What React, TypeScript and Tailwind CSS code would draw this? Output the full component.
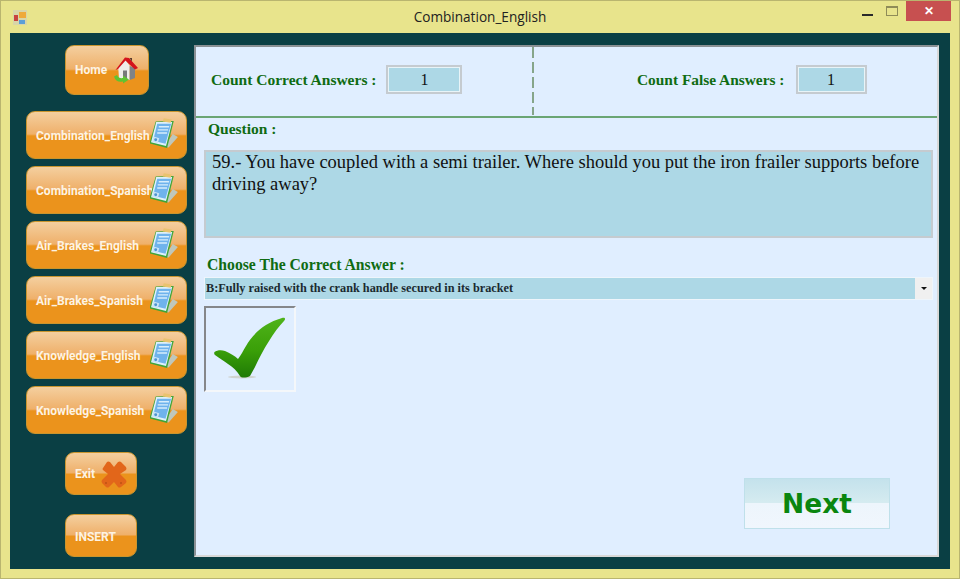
const SIDE_BUTTONS = [
  "Combination_English",
  "Combination_Spanish",
  "Air_Brakes_English",
  "Air_Brakes_Spanish",
  "Knowledge_English",
  "Knowledge_Spanish",
];

const GLOSS =
  "bg-[linear-gradient(to_bottom,#f4cf9f_0%,#efb06a_48%,#eb931c_52%,#eb931c_100%)] border border-[#c9952e]";

function ClipboardIcon() {
  return (
    <svg width="31" height="34" viewBox="0 0 30 32" className="shrink-0">
      <path d="M22 16 L27 19 L18 29 L14 28 Z" fill="#bfc7bb" />
      <path d="M5.5 4 L23 3.5 L16.5 29.5 L-0.5 25 Z" fill="#3fa53a" />
      <path d="M6 4.5 L21.5 4.5 L15.5 27.5 L1 24 Z" fill="#dff0fb" />
      <path d="M7 6 L20.5 6 L15 25.5 L3 22.5 Z" fill="#6fb3ec" />
      <path d="M8.5 9 H18.5 M7.5 12 H17.5 M7 15 H16.5" stroke="#d8edfb" strokeWidth="1.3" />
      <path d="M3.5 18.5 L9 20 L7.5 25 L2 23.5 Z" fill="#c9e4f6" />
      <circle cx="5.5" cy="21.5" r="1.4" fill="#4e94cf" />
      <path d="M13.3 0.7 L21 2 L20 5 L12.3 4 Z" fill="#e9c36f" />
    </svg>
  );
}

function HomeIcon() {
  return (
    <svg width="26" height="27" viewBox="0 0 26 27" className="shrink-0">
      <path d="M4.3 10 L11.7 3 L15.7 9 V23 L5 23 Z" fill="#eeeeea" />
      <path d="M15.7 9 L21 11 V21 L15.7 23 Z" fill="#7f8387" />
      <rect x="9" y="13.5" width="4" height="8.5" fill="#77797a" />
      <path d="M1.5 13 L11 0.5 L15 1 L24 11 L21 12.5 L14.5 6.5 L11.5 3.5 L4 12 Z" fill="#d4131c" />
      <path d="M15.5 1 H18 V4.5 Z" fill="#5b3b2c" />
      <path d="M0 19.5 L3 18 C4 21 7 21.5 9 21 L9 18.5 L15 22.5 L9 26.5 L9 24.5 C5 25.5 1 24 0 19.5 Z" fill="#5fc332" />
    </svg>
  );
}

function CrossIcon() {
  return (
    <svg width="28" height="28" viewBox="0 0 28 28" className="shrink-0">
      <path
        d="M3 8 L7 2 Q8 1 10 2 L14 7 L18 2 Q20 1 21 2 L26 7 Q27 9 26 10 L20 14 L26 20 Q27 22 26 23 L21 27 Q19 28 18 27 L14 22 L9 27 Q8 28 6 27 L2 23 Q1 21 2 20 L8 14 L3 10 Q2 9 3 8 Z"
        fill="#e2661a"
      />
      <circle cx="6" cy="23" r="0.7" fill="#9c3a10" />
      <circle cx="21" cy="23" r="0.7" fill="#9c3a10" />
    </svg>
  );
}

function CheckMark() {
  return (
    <svg width="72" height="62" viewBox="0 0 72 62">
      <defs>
        <linearGradient id="tick" x1="0" y1="0" x2="0" y2="1">
          <stop offset="0" stopColor="#4fb31a" />
          <stop offset="0.55" stopColor="#3a9f08" />
          <stop offset="1" stopColor="#1f7a06" />
        </linearGradient>
      </defs>
      <ellipse cx="28" cy="60" rx="14" ry="1.4" fill="#cfd3cf" />
      <path
        d="M0.5 35 C3 33 8 33 11 34 C16 36 21 39 24 42 C27 38 29 34 32 29 C38 18 50 6 68 1 C71 0 72 2 70 4 C60 14 49 33 41 50 L36 59 C32 61 27 61 26 59 C23 54 19 50 14 47 C10 44 5 41 1 38 C0 37 0 36 0.5 35 Z"
        fill="url(#tick)"
      />
    </svg>
  );
}

function OrangeButton({ label, icon, className }: { label: string; icon?: React.ReactNode; className: string }) {
  return (
    <button type="button" className={`flex items-center rounded-[9px] pl-[9px] ${GLOSS} ${className}`}>
      <span className="font-['Roboto',sans-serif] text-[12px] font-bold text-[#fdf3e3]">{label}</span>
      {icon}
    </button>
  );
}

export default function App() {
  return (
    <div className="flex h-[579px] w-[960px] flex-col border border-[#b9b56f] bg-[#e8e48c] font-['Liberation_Serif',serif]">
      {/* title bar */}
      <div className="flex h-[32px] shrink-0 items-start">
        <svg width="14" height="15" viewBox="0 0 14 15" className="ml-[12px] mt-[9px]">
          <rect width="14" height="15" fill="#d8d6a8" />
          <rect x="1" y="5" width="4" height="6" fill="#c8433f" />
          <rect x="6" y="2" width="7" height="6" fill="#eeaa3a" />
          <rect x="6" y="10" width="6" height="4" fill="#5c9fd8" />
        </svg>
        <div className="flex-1 pl-[71px] pt-[7px] text-center font-['Open_Sans',sans-serif] text-[13.6px] leading-[18px] text-[#222]">
          Combination_English
        </div>
        <div className="mr-[8px] flex items-start">
          <div className="mt-[13px] h-[2px] w-[11px] bg-[#2a2a2a]" />
          <div className="ml-[13px] mt-[5px] h-[10px] w-[12px] border border-[#8f8c58] border-t-2" />
          <div className="ml-[8px] flex h-[20px] w-[45px] items-center justify-center bg-[#c75050] font-['Liberation_Sans',sans-serif] text-[12px] font-bold text-white">
            ✕
          </div>
        </div>
      </div>

      {/* dark body */}
      <div className="ml-[9px] mr-[9px] flex h-[536px] shrink-0 bg-[#0a3f44] pt-[12px]">
        <div className="w-[184px] shrink-0 pl-[16px]">
          <OrangeButton
            label="Home"
            icon={<span className="ml-[7px]"><HomeIcon /></span>}
            className="ml-[39px] h-[50px] w-[84px]"
          />
          <div className="mt-[16px] flex flex-col gap-[7px]">
            {SIDE_BUTTONS.map((name) => (
              <OrangeButton
                key={name}
                label={name}
                icon={<span className="absolute right-[5px] top-[5px]"><ClipboardIcon /></span>}
                className="relative h-[48px] w-[161px] pt-[2px]"
              />
            ))}
          </div>
          <OrangeButton
            label="Exit"
            icon={<span className="ml-[5px]"><CrossIcon /></span>}
            className="ml-[39px] mt-[18px] h-[43px] w-[72px]"
          />
          <OrangeButton label="INSERT" className="ml-[39px] mt-[19px] h-[43px] w-[72px] pt-[2px]" />
        </div>

        {/* main panel */}
        <div className="flex h-[512px] w-[745px] flex-col border-2 border-b-[#d8d8d8] border-l-[#8a9094] border-r-[#d8d8d8] border-t-[#8a9094] bg-[#e0eeff]">
          <div className="box-content flex h-[69px] shrink-0 border-b-2 border-[#6aa574]">
            <div className="flex w-[336px] items-center pb-[4px] pl-[15px]">
              <span className="text-[15.5px] font-bold text-[#0f6b12]">Count Correct Answers :</span>
              <div className="ml-[10px] flex h-[29px] w-[76px] items-center justify-center border-2 border-[#c5cbd0] bg-[#add8e6] text-[16px] text-[#111] shadow-[inset_0_0_0_1px_#e8f4f8]">
                1
              </div>
            </div>
            <div className="h-[68px] w-[2px] bg-[repeating-linear-gradient(to_bottom,#86a58a_0,#86a58a_11px,transparent_11px,transparent_15px)]" />
            <div className="flex flex-1 items-center pb-[4px] pl-[103px]">
              <span className="text-[15.4px] font-bold text-[#0f6b12]">Count False Answers :</span>
              <div className="ml-[11px] flex h-[29px] w-[71px] items-center justify-center border-2 border-[#c5cbd0] bg-[#add8e6] text-[16px] text-[#111] shadow-[inset_0_0_0_1px_#e8f4f8]">
                1
              </div>
            </div>
          </div>

          <div className="flex flex-1 flex-col px-[8px]">
            <div className="ml-[4px] mt-[2px] text-[15.5px] font-bold leading-[18px] text-[#0f6b12]">Question :</div>
            <div className="mt-[12px] h-[88px] w-[729px] border-2 border-[#c5cbd0] bg-[#add8e6] px-[6px] text-[18.5px] leading-[22px] text-[#111]">
              <p className="-mt-[1px]">
                59.- You have coupled with a semi trailer. Where should you put the iron frailer supports before driving away?
              </p>
            </div>
            <div className="ml-[3px] mt-[18px] text-[15.7px] font-bold leading-[18px] text-[#0f6b12]">
              Choose The Correct Answer :
            </div>
            <div className="mt-[3px] flex h-[23px] w-[729px] border border-[#eef5fb]">
              <div className="flex-1 bg-[#add8e6] pl-[1px] text-[12.25px] font-bold leading-[21px] text-[#1b2a30]">
                B:Fully raised with the crank handle secured in its bracket
              </div>
              <div className="flex w-[17px] items-center justify-center bg-[#f0f0f0]">
                <div className="h-0 w-0 border-x-[3px] border-t-[3px] border-x-transparent border-t-[#111]" />
              </div>
            </div>
            <div className="mt-[6px] flex h-[86px] w-[92px] items-center justify-center border-2 border-b-[#f4f7fa] border-l-[#85878a] border-r-[#f4f7fa] border-t-[#85878a] pb-[3px]">
              <CheckMark />
            </div>
            <div className="ml-[540px] mt-[86px] flex h-[51px] w-[146px] items-center justify-center border border-[#bfe0ea] bg-[linear-gradient(to_bottom,#c4e2ec_0%,#d5ebf0_48%,#edf5fc_50%,#f0f6fd_100%)]">
              <span className="font-['DejaVu_Sans',sans-serif] text-[26.5px] font-bold text-[#0a860f]">
                Next
              </span>
            </div>
          </div>
        </div>
      </div>
    </div>
  );
}
